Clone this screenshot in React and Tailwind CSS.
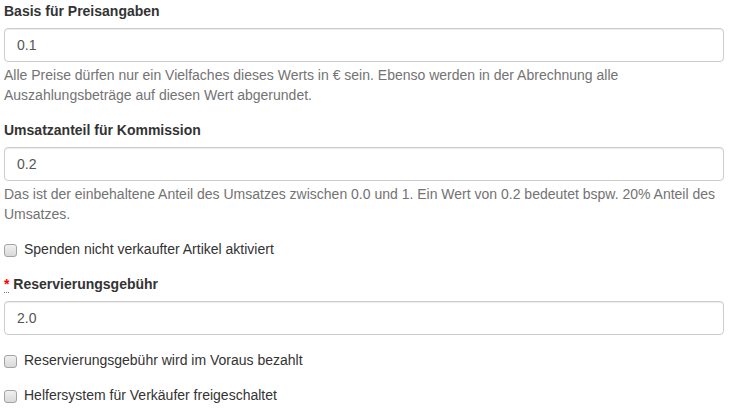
const FIELDS = [
  {
    type: "input",
    label: "Basis für Preisangaben",
    value: "0.1",
    help: "Alle Preise dürfen nur ein Vielfaches dieses Werts in € sein. Ebenso werden in der Abrechnung alle Auszahlungsbeträge auf diesen Wert abgerundet.",
  },
  {
    type: "input",
    label: "Umsatzanteil für Kommission",
    value: "0.2",
    help: "Das ist der einbehaltene Anteil des Umsatzes zwischen 0.0 und 1. Ein Wert von 0.2 bedeutet bspw. 20% Anteil des Umsatzes.",
  },
  { type: "checkbox", label: "Spenden nicht verkaufter Artikel aktiviert" },
  { type: "input", label: "Reservierungsgebühr", value: "2.0", required: true },
  { type: "checkbox", label: "Reservierungsgebühr wird im Voraus bezahlt" },
  { type: "checkbox", label: "Helfersystem für Verkäufer freigeschaltet" },
];

function CheckBox() {
  return (
    <span className="absolute left-0 top-[5px] block h-[13px] w-[13px] rounded-[3px] border border-[#a3a3a3] bg-gradient-to-b from-[#f0f0f0] to-[#d9d9d9]" />
  );
}

function Field({ field }) {
  if (field.type === "checkbox") {
    return (
      <div className="mb-[15px]">
        <label className="relative block pl-5 leading-5 text-[#333]">
          <CheckBox />
          {field.label}
        </label>
      </div>
    );
  }

  return (
    <div className="mb-[15px]">
      <label className="mb-[7px] block font-bold leading-5 text-[#333]">
        {field.required && (
          <>
            <abbr title="required" className="border-b border-dotted border-[#777] text-[#f00] no-underline">
              *
            </abbr>{" "}
          </>
        )}
        {field.label}
      </label>
      <div className="h-[34px] rounded-[4px] border border-[#ccc] bg-white px-3 py-[6px] leading-5 text-[#555] shadow-[inset_0_1px_1px_rgba(0,0,0,0.075)]">
        {field.value}
      </div>
      {field.help && <p className="mt-[3px] leading-5 text-[#737373]">{field.help}</p>}
    </div>
  );
}

export default function App() {
  return (
    <div className="min-h-[408px] bg-white pl-[4px] pr-[10px] pt-[1px] font-['Liberation_Sans',Arial,sans-serif] text-[14px]">
      {FIELDS.map((field) => (
        <Field key={field.label} field={field} />
      ))}
    </div>
  );
}
